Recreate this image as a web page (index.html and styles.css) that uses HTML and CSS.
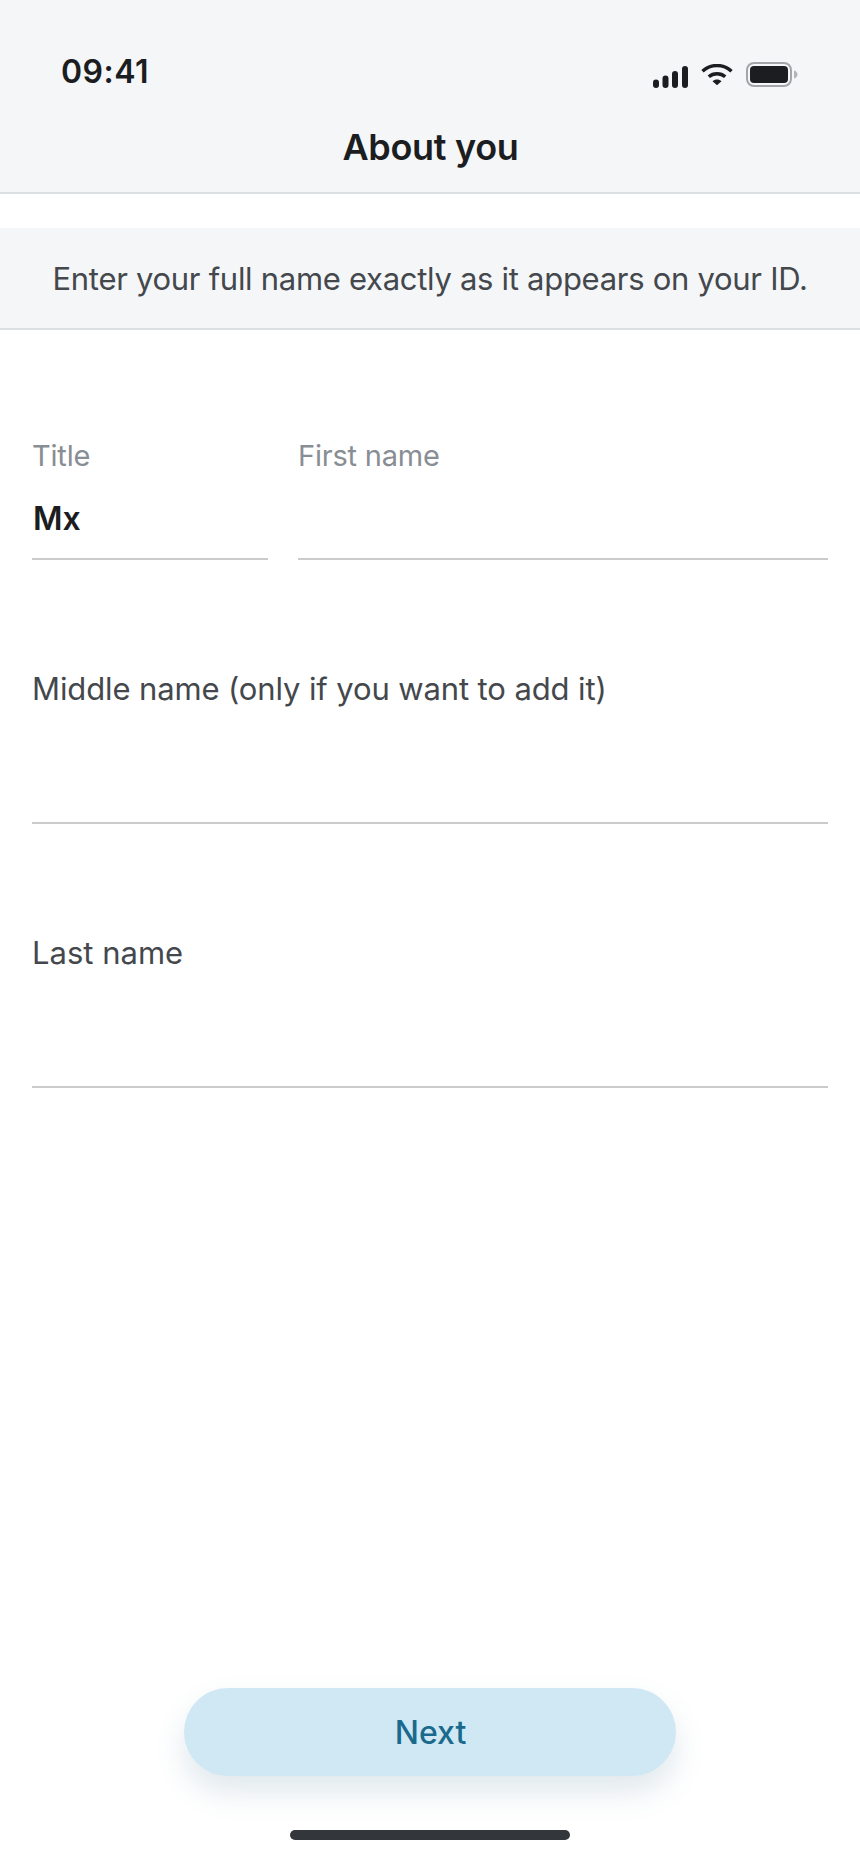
FILE: index.html
```html
<!DOCTYPE html>
<html lang="en">
<head>
<meta charset="utf-8">
<title>About you</title>
<link rel="stylesheet" href="styles.css">
</head>
<body>
<div class="screen">
  <header class="top">
    <div class="status">
      <span class="time">09:41</span>
      <div class="status-icons">
        <svg class="ic-signal" width="35" height="22" viewBox="0 0 35 22"><rect x="0" y="13.500" width="6" height="8.500" rx="3"/><rect x="9.500" y="9.500" width="6" height="12.500" rx="3"/><rect x="19" y="5" width="6" height="17" rx="3"/><rect x="29" y="0" width="6" height="22" rx="3"/></svg>
        <svg class="ic-wifi" width="32" height="21" viewBox="0 0 32 21"><path d="M1.500 7.200C9.500-.4 22.500-.4 30.500 7.200" fill="none" stroke="#1b1d21" stroke-width="3.400"/><path d="M7.800 12.800c4.400-4 12-4 16.400 0" fill="none" stroke="#1b1d21" stroke-width="3.400"/><path d="M11.500 17.200c2.500-2.200 6.500-2.200 9 0L16 21.200z"/></svg>
        <svg class="ic-battery" width="52" height="25" viewBox="0 0 52 25"><rect x="1" y="1" width="44" height="23" rx="7" fill="none" stroke="#a3a6a9" stroke-width="2"/><rect x="4" y="4" width="38" height="17" rx="4"/><path d="M48 8.500c2.200.6 3.500 2 3.500 4s-1.300 3.400-3.500 4z" fill="#b4b7ba"/></svg>
      </div>
    </div>
    <h1 class="title">About you</h1>
  </header>
  <div class="notice">Enter your full name exactly as it appears on your ID.</div>
  <main class="form">
    <div class="row">
      <div class="field field-title">
        <span class="label label-small">Title</span>
        <span class="value">Mx</span>
      </div>
      <div class="field field-first">
        <span class="label label-small">First name</span>
        <span class="value"></span>
      </div>
    </div>
    <div class="field field-big">
      <span class="label label-long">Middle name (only if you want to add it)</span>
    </div>
    <div class="field field-big">
      <span class="label">Last name</span>
    </div>
  </main>
  <footer class="foot">
    <button class="next" type="button">Next</button>
    <div class="home"></div>
  </footer>
</div>
</body>
</html>
```

FILE: styles.css
```css
* { box-sizing: border-box; }
html, body { margin: 0; padding: 0; background: #fff; }
.screen {
  width: 860px;
  height: 1864px;
  display: flex;
  flex-direction: column;
  font-family: Inter, "Noto Sans", sans-serif;
  color: #1b1d21;
  overflow: hidden;
}
.top {
  height: 194px;
  background: #f4f6f8;
  border-bottom: 2px solid #dcdfe1;
}
.status {
  height: 124px;
  padding: 53px 62px 0 61px;
  display: flex;
  justify-content: space-between;
  align-items: flex-start;
}
.time {
  font-size: 32px;
  line-height: 38px;
  font-weight: 600;
  letter-spacing: 0.5px;
}
.status-icons {
  display: flex;
  align-items: flex-end;
  gap: 13px;
  padding-top: 9px;
  height: 35px;
}
.status-icons svg { display: block; fill: #1b1d21; }
.ic-wifi { margin-bottom: 3px; }
.ic-battery { margin-bottom: 1px; }
.title {
  margin: 0;
  padding-left: 1px;
  text-align: center;
  font-size: 36px;
  line-height: 46px;
  font-weight: 600;
  letter-spacing: -0.3px;
}
.notice {
  margin-top: 34px;
  height: 102px;
  background: #f4f6f8;
  border-bottom: 2px solid #dcdfe1;
  display: flex;
  align-items: center;
  justify-content: center;
  padding-top: 1px;
  font-size: 31px;
  line-height: 40px;
  letter-spacing: -0.29px;
  color: #44484d;
}
.form {
  flex: 1;
  padding: 106px 32px 0;
  display: flex;
  flex-direction: column;
}
.row {
  display: flex;
  gap: 30px;
}
.field {
  display: flex;
  flex-direction: column;
  border-bottom: 2px solid #c9cbcd;
}
.field-title { width: 236px; height: 124px; }
.field-first { flex: 1; height: 124px; }
.label {
  font-size: 31px;
  line-height: 40px;
  color: #44484d;
}
.label-long { letter-spacing: -0.12px; }
.label-small {
  font-size: 29px;
  line-height: 40px;
  letter-spacing: -0.2px;
  color: #888e93;
}
.value {
  margin-top: 23px;
  padding-left: 1px;
  font-size: 32px;
  line-height: 40px;
  font-weight: 600;
  color: #1b1d21;
}
.field-big {
  height: 155px;
  margin-top: 109px;
}
.foot {
  display: flex;
  flex-direction: column;
  align-items: center;
  padding-bottom: 24px;
}
.next {
  width: 492px;
  height: 88px;
  padding: 0 0 0 1px;
  border: 0;
  border-radius: 44px;
  background: #d0e8f4;
  color: #1a6a8e;
  font-family: inherit;
  font-size: 32px;
  font-weight: 500;
  box-shadow: 0 16px 30px rgba(60, 110, 140, 0.16);
}
.home {
  margin-top: 54px;
  width: 280px;
  height: 10px;
  border-radius: 5px;
  background: #33363a;
}
```
